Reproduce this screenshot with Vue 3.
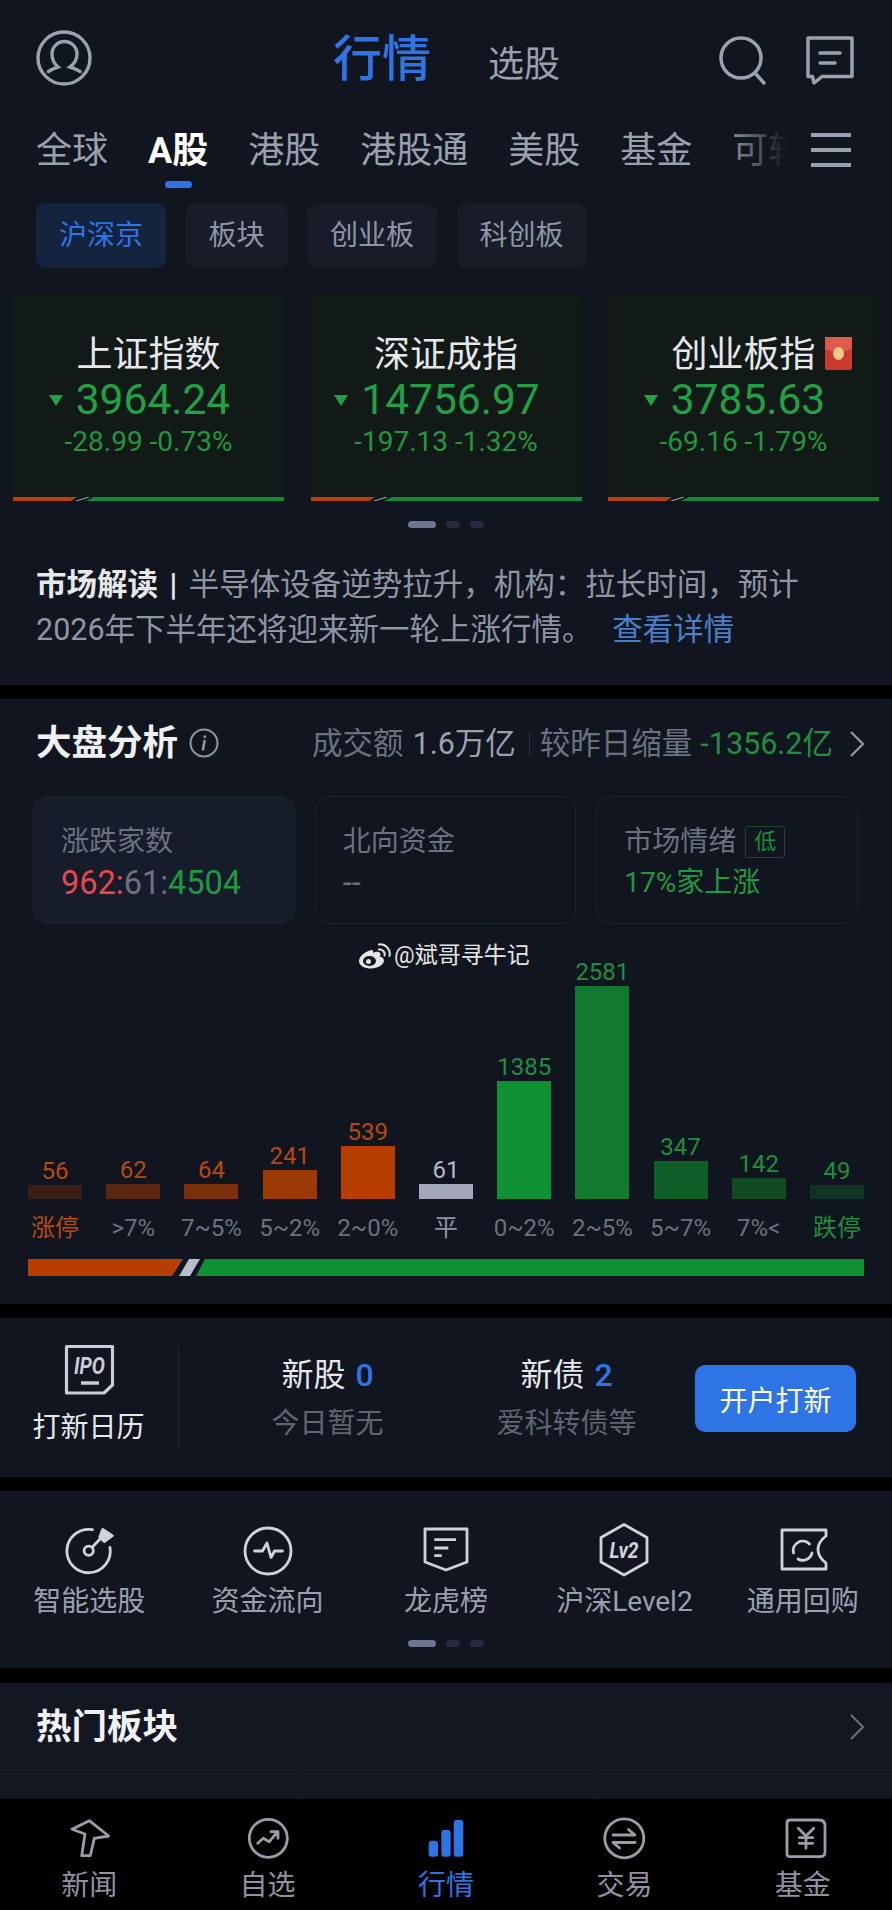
<script setup>
const tabs = ['全球', 'A股', '港股', '港股通', '美股', '基金', '可转债']
const chips = ['沪深京', '板块', '创业板', '科创板']

const indices = [
  { name: '上证指数', value: '3964.24', change: '-28.99 -0.73%' },
  { name: '深证成指', value: '14756.97', change: '-197.13 -1.32%' },
  { name: '创业板指', value: '3785.63', change: '-69.16 -1.79%', packet: true },
]

const red = '#b8480f'
const green = '#1f8f3e'
const buckets = [
  { count: 56, label: '涨停', height: 14, fill: '#3a1f15', ink: red, labelInk: red },
  { count: 62, label: '>7%', height: 15, fill: '#5a2511', ink: red },
  { count: 64, label: '7~5%', height: 15, fill: '#7c2f0b', ink: red },
  { count: 241, label: '5~2%', height: 29, fill: '#9b3a05', ink: red },
  { count: 539, label: '2~0%', height: 53, fill: '#b83e00', ink: red },
  { count: 61, label: '平', height: 15, fill: '#a3a9ba', ink: '#b5b9c6', labelInk: '#8f94a3' },
  { count: 1385, label: '0~2%', height: 118, fill: '#0f9032', ink: green },
  { count: 2581, label: '2~5%', height: 213, fill: '#117a30', ink: green },
  { count: 347, label: '5~7%', height: 38, fill: '#0f5f28', ink: green },
  { count: 142, label: '7%<', height: 21, fill: '#104a23', ink: green },
  { count: 49, label: '跌停', height: 14, fill: '#113324', ink: green, labelInk: green },
]
</script>

<template>
  <div class="page">
    <section class="block market">
      <header class="top">
        <svg class="avatar" width="56" height="56" viewBox="0 0 56 56" fill="none" stroke="#9aa0b0" stroke-width="3.4" stroke-linecap="round">
          <circle cx="28" cy="28" r="26" />
          <path d="M12.5 41.5Q17 38.5 22 37 16 32 16 24A12.5 12.5 0 0 1 41 24Q41 32 34 37 39 38.5 44 41.5" />
        </svg>
        <div class="top-title">
          <span class="top-active">行情</span>
          <span class="top-other">选股</span>
        </div>
        <div class="top-actions">
          <svg width="52" height="56" viewBox="0 0 52 56" fill="none" stroke="#9aa0b0" stroke-width="3.5" stroke-linecap="round">
            <circle cx="22" cy="24" r="20" />
            <path d="M36 39L45 49" />
          </svg>
          <svg width="52" height="56" viewBox="0 0 52 56" fill="none" stroke="#9aa0b0" stroke-width="3.5" stroke-linejoin="round" stroke-linecap="round">
            <path d="M4 4H48V42.5H18L10 49 8.5 42.5H4Z" />
            <path d="M16 19H36M16 29H31" />
          </svg>
        </div>
      </header>

      <nav class="tabs">
        <div class="tab-strip">
          <span v-for="tab in tabs" :key="tab" class="tab" :class="{ 'is-on': tab === 'A股' }">{{ tab }}</span>
        </div>
        <svg class="tab-menu" width="42" height="36" viewBox="0 0 42 36" fill="#9aa0b0">
          <rect x="1" y="1" width="40" height="4" />
          <rect x="1" y="16" width="40" height="4" />
          <rect x="1" y="31" width="40" height="4" />
        </svg>
      </nav>

      <div class="chips">
        <span v-for="(chip, i) in chips" :key="chip" class="chip" :class="{ 'is-on': i === 0 }">{{ chip }}</span>
      </div>

      <div class="index-cards">
        <article v-for="item in indices" :key="item.name" class="index-card">
          <div class="index-name">{{ item.name }}</div>
          <svg v-if="item.packet" class="packet" width="27" height="33" viewBox="0 0 27 33">
            <rect width="27" height="33" rx="2" fill="#cb3a30" />
            <path d="M0 0H27V12Q13.5 18 0 12Z" fill="#dd5a4c" />
            <ellipse cx="13.5" cy="16.5" rx="5.5" ry="6.5" fill="#f0c987" />
          </svg>
          <div class="index-value">
            <i class="down"></i>
            <span>{{ item.value }}</span>
          </div>
          <div class="index-change">{{ item.change }}</div>
          <svg class="ratio" width="271" height="4" viewBox="0 0 271 4">
            <polygon points="0,0 64,0 58,4 0,4" fill="#b8400a" />
            <path d="M63 4L76 0" stroke="#a8acb8" stroke-width="1" />
            <polygon points="81,0 271,0 271,4 73,4" fill="#15893a" />
          </svg>
        </article>
      </div>

      <div class="dots dots-index"><i class="on"></i><i></i><i></i></div>

      <p class="brief">
        <b>市场解读 | </b>半导体设备逆势拉升，机构：拉长时间，预计<br />2026年下半年还将迎来新一轮上涨行情。 <a>查看详情</a>
      </p>
    </section>

    <section class="block analysis">
      <div class="analysis-head">
        <h2 class="heading">大盘分析</h2>
        <svg class="info" width="30" height="30" viewBox="0 0 30 30" fill="none" stroke="#8f95a4" stroke-width="2">
          <circle cx="15" cy="15" r="13.5" />
          <path d="M15.8 8.5V9M15.5 13L14 21.5" stroke-width="2.6" stroke-linecap="round" />
        </svg>
        <div class="turnover">
          <span class="dim">成交额</span>
          <span class="bright">1.6万亿</span>
          <i class="sep"></i>
          <span class="dim">较昨日缩量</span>
          <span class="fall">-1356.2亿</span>
          <svg width="16" height="26" viewBox="0 0 16 26" fill="none" stroke="#8f95a4" stroke-width="2.4">
            <path d="M2 1L14 13 2 25" />
          </svg>
        </div>
      </div>

      <div class="stats">
        <div class="stat is-first">
          <div class="stat-label">涨跌家数</div>
          <div class="stat-value"><span class="c-red">962:</span><span class="c-gray">61:</span><span class="c-green">4504</span></div>
        </div>
        <div class="stat">
          <div class="stat-label">北向资金</div>
          <div class="stat-value c-gray">--</div>
        </div>
        <div class="stat">
          <div class="stat-label">市场情绪<span class="mood">低</span></div>
          <div class="stat-value stat-value-text c-green">17%家上涨</div>
        </div>
      </div>

      <!-- weibo handle laid over the chart -->
      <div class="handle">
        <svg width="34" height="26" viewBox="0 0 34 26" fill="none">
          <path d="M13 7C6 9 1 14 1 18C1 23 7 25.5 13 25.5C20 25.5 26 21.5 26 17.5C26 15 23.5 14 22 13.5C23 11 22.5 9.5 20.5 9C18.5 8.5 16 9.5 15 10C15.5 7.5 15 6.5 13 7Z" fill="#e4e4e4" />
          <ellipse cx="11.5" cy="18" rx="6.5" ry="5" fill="#11151f" />
          <circle cx="10.5" cy="18.5" r="2.5" fill="#e4e4e4" />
          <path d="M21 1.5C27 0.5 33 6 31.5 13M21 6.5C24 6 27.5 9 26.5 12.5" stroke="#e4e4e4" stroke-width="2" stroke-linecap="round" />
        </svg>
        <span>@斌哥寻牛记</span>
      </div>

      <div class="chart">
        <div v-for="b in buckets" :key="b.label" class="chart-col">
          <span class="chart-count" :style="{ color: b.ink }">{{ b.count }}</span>
          <div class="chart-bar" :style="{ height: b.height + 'px', background: b.fill }"></div>
        </div>
      </div>
      <div class="chart-labels">
        <span v-for="b in buckets" :key="b.label" :style="b.labelInk ? { color: b.labelInk } : null">{{ b.label }}</span>
      </div>
      <svg class="spread" width="836" height="17" viewBox="0 0 836 17">
        <polygon points="0,0 155,0 144,17 0,17" fill="#b83e00" />
        <polygon points="161,0 172,0 162,17 151,17" fill="#b9bdca" />
        <polygon points="177,0 836,0 836,17 168,17" fill="#0f9032" />
      </svg>
    </section>

    <section class="block ipo">
      <div class="ipo-entry">
        <svg width="56" height="56" viewBox="0 0 56 56" fill="none" stroke="#c8ccd4" stroke-width="3.2" stroke-linejoin="round">
          <path d="M5.5 4.5H51.5V43L43 51H5.5Z" />
          <text x="28.5" y="32" text-anchor="middle" fill="#c8ccd4" stroke="none" font-size="23" font-weight="700" font-style="italic" font-family="Roboto, sans-serif" textLength="31" lengthAdjust="spacingAndGlyphs">IPO</text>
          <path d="M20 41H38" stroke-width="3.5" />
        </svg>
        <span>打新日历</span>
      </div>
      <i class="ipo-divider"></i>
      <div class="ipo-cols">
        <div class="ipo-col">
          <div class="ipo-title">新股 <em>0</em></div>
          <div class="ipo-sub">今日暂无</div>
        </div>
        <div class="ipo-col">
          <div class="ipo-title">新债 <em>2</em></div>
          <div class="ipo-sub">爱科转债等</div>
        </div>
      </div>
      <button class="ipo-btn">开户打新</button>
    </section>

    <section class="block shortcuts">
      <div class="shortcut-row">
        <div class="shortcut">
          <svg width="56" height="56" viewBox="0 0 56 56" fill="none" stroke="#d0d3da" stroke-width="2.8" stroke-linecap="round" stroke-linejoin="round">
            <path d="M31.5 6.7A21.7 21.7 0 1 0 49 24.5" />
            <circle cx="27.7" cy="27.7" r="4.6" />
            <path d="M31 24.5L39 16" />
            <path d="M41.7 6.5L51.2 12.7 43.3 18.5 38.8 14.3Z" fill="#d0d3da" />
          </svg>
          <span>智能选股</span>
        </div>
        <div class="shortcut">
          <svg width="56" height="56" viewBox="0 0 56 56" fill="none" stroke="#d0d3da" stroke-width="2.8" stroke-linecap="round" stroke-linejoin="round">
            <circle cx="28" cy="28" r="23" />
            <path d="M14.5 28H22.5L27 20 31 34.5 34.5 28H42.5" />
          </svg>
          <span>资金流向</span>
        </div>
        <div class="shortcut">
          <svg width="56" height="56" viewBox="0 0 56 56" fill="none" stroke="#d0d3da" stroke-width="2.8" stroke-linejoin="round">
            <path d="M7 6H49V39L28 47 7 39Z" />
            <path d="M16.3 16.7H38M16.3 25H30.3M16.3 32.7H23.7" />
          </svg>
          <span>龙虎榜</span>
        </div>
        <div class="shortcut">
          <svg width="56" height="56" viewBox="0 0 56 56" fill="none" stroke="#d0d3da" stroke-width="2.8" stroke-linejoin="round">
            <path d="M28 1.5L51 14.5V39L28 52 5 39V14.5Z" />
            <text x="28" y="35" text-anchor="middle" fill="#d0d3da" stroke="none" font-size="22" font-weight="700" font-style="italic" font-family="Roboto, sans-serif" textLength="29" lengthAdjust="spacingAndGlyphs">Lv2</text>
          </svg>
          <span>沪深Level2</span>
        </div>
        <div class="shortcut">
          <svg width="56" height="56" viewBox="0 0 56 56" fill="none" stroke="#d0d3da" stroke-width="2.8" stroke-linejoin="round" stroke-linecap="round">
            <path d="M7 7H51V13Q43 19 43 26.5 43 34 51 40V46H7Z" />
            <path d="M18.5 30A9.5 9.5 0 0 1 34.5 21M37 30A9.5 9.5 0 0 1 23 36" />
          </svg>
          <span>通用回购</span>
        </div>
      </div>
      <div class="dots dots-short"><i class="on"></i><i></i><i></i></div>
    </section>

    <section class="block sectors">
      <div class="sectors-head">
        <h2 class="heading">热门板块</h2>
        <svg width="16" height="26" viewBox="0 0 16 26" fill="none" stroke="#6a7080" stroke-width="2">
          <path d="M2 1L14 13 2 25" />
        </svg>
      </div>
      <div class="sector-grid"><i></i><i></i><i></i></div>
    </section>

    <footer class="tabbar">
      <div class="tabbar-item">
        <svg width="56" height="56" viewBox="0 0 56 56" fill="none" stroke="#9a9ea8" stroke-width="2.8" stroke-linejoin="round">
          <path d="M11 19.3L28.3 10.7 47.7 26 33.3 28.3 29.3 45.7H20.7L24 24Z" />
        </svg>
        <span>新闻</span>
      </div>
      <div class="tabbar-item">
        <svg width="56" height="56" viewBox="0 0 56 56" fill="none" stroke="#9a9ea8" stroke-width="2.8" stroke-linecap="round" stroke-linejoin="round">
          <circle cx="28.3" cy="28.3" r="19" />
          <path d="M17.7 33.3L23.3 28.3 29.3 31.7 37.7 21.7M31 21.7H38V28.3" />
        </svg>
        <span>自选</span>
      </div>
      <div class="tabbar-item is-on">
        <svg width="56" height="56" viewBox="0 0 56 56" fill="#2f74e4">
          <rect x="10.7" y="30.7" width="9.3" height="16" rx="3" />
          <rect x="23.3" y="20" width="9.4" height="26.7" rx="3" />
          <rect x="35.7" y="10" width="9.6" height="36.7" rx="3" />
        </svg>
        <span>行情</span>
      </div>
      <div class="tabbar-item">
        <svg width="56" height="56" viewBox="0 0 56 56" fill="none" stroke="#9a9ea8" stroke-width="2.8" stroke-linecap="round" stroke-linejoin="round">
          <circle cx="28.3" cy="28.3" r="19.5" />
          <path d="M17 25H39L32.5 19.5M39 32.5H17L23.5 38" />
        </svg>
        <span>交易</span>
      </div>
      <div class="tabbar-item">
        <svg width="56" height="56" viewBox="0 0 56 56" fill="none" stroke="#9a9ea8" stroke-width="2.8" stroke-linecap="round" stroke-linejoin="round">
          <path d="M15 10H44Q50 10 50 16V42Q50 46.7 45 46.7H15Q12 46.7 12 43.7V13Q12 10 15 10Z" />
          <path d="M23.3 18.3L31 26 38.7 18.3M24.3 27.7H37.7M24.3 33.3H37.7M31 26V38.3" />
        </svg>
        <span>基金</span>
      </div>
    </footer>
  </div>
</template>

<style>
html,
body {
  margin: 0;
  background: #000;
}
</style>

<style scoped>
.page {
  width: 892px;
  height: 1910px;
  overflow: hidden;
  display: flex;
  flex-direction: column;
  font-family: Roboto, "Noto Sans CJK SC", sans-serif;
  color: #9aa0ae;
  background: #000;
}

.block {
  background: #11151f;
  position: relative;
}

/* top bar */
.market {
  height: 685px;
}

.top {
  display: flex;
  padding: 30px 36px 0 36px;
  height: 56px;
}

.top-title {
  display: flex;
  align-items: flex-end;
  gap: 57px;
  margin-left: 241px;
  height: 56px;
}

.top-active {
  font-size: 49px;
  line-height: 52px;
  font-weight: 500;
  color: #2f74e4;
}

.top-other {
  font-size: 36px;
  line-height: 42px;
  color: #9aa0ae;
}

.top-actions {
  display: flex;
  gap: 33px;
  margin-left: auto;
  padding-top: 4px;
}

/* channel tabs */
.tabs {
  display: flex;
  margin-top: 43px;
  padding: 0 40px 30px 36px;
}

.tab-strip {
  position: relative;
  display: flex;
  gap: 40px;
  width: 763px;
  height: 44px;
  overflow: hidden;
  padding-bottom: 17px;
  margin-bottom: -17px;
  white-space: nowrap;
}

.tab-strip::after {
  content: "";
  position: absolute;
  top: 0;
  right: 0;
  width: 75px;
  height: 44px;
  background: linear-gradient(90deg, rgba(17, 21, 31, 0), #11151f 85%);
}

.tab {
  position: relative;
  flex: none;
  font-size: 36px;
  line-height: 44px;
}

.tab.is-on {
  color: #fff;
  font-weight: 700;
}

.tab.is-on::after {
  content: "";
  position: absolute;
  left: 17px;
  top: 52px;
  width: 27px;
  height: 7px;
  border-radius: 4px;
  background: #2f74e4;
}

.tab-menu {
  margin: 3px 0 0 11px;
  flex: none;
}

.chips {
  display: flex;
  gap: 19.5px;
  padding-left: 36px;
}

.chip {
  padding: 0 23px;
  height: 65px;
  font-size: 28px;
  line-height: 66px;
  border-radius: 9px;
  background: #171c28;
  color: #8f95a4;
}

.chip.is-on {
  background: #14243f;
  color: #2f74e4;
}

/* index cards */
.index-cards {
  display: flex;
  gap: 26.5px;
  margin-top: 25px;
  padding-left: 13px;
}

.index-card {
  position: relative;
  width: 271px;
  height: 208px;
  padding-top: 40px;
  box-sizing: border-box;
  display: flex;
  flex-direction: column;
  align-items: center;
  background: #111a17;
  border-radius: 6px 6px 0 0;
}

.index-name {
  font-size: 36px;
  line-height: 44px;
  color: #e6e8ec;
}

.packet {
  position: absolute;
  left: 217px;
  top: 44px;
}

.index-value {
  display: flex;
  align-items: center;
  gap: 13px;
  margin: 1px 18px 0 0;
  font-size: 42.5px;
  line-height: 44px;
  color: #23a046;
}

.down {
  width: 0;
  height: 0;
  border-style: solid;
  border-width: 11px 7px 0;
  border-color: #23a046 transparent transparent;
}

.index-change {
  margin-top: 3px;
  font-size: 28px;
  line-height: 34px;
  color: #22953f;
}

.ratio {
  position: absolute;
  left: 0;
  bottom: 0;
}

/* pager dots */
.dots {
  display: flex;
  justify-content: center;
  gap: 10px;
}

.dots i {
  width: 14px;
  height: 7px;
  border-radius: 4px;
  background: #252b3d;
}

.dots i.on {
  width: 28px;
  background: #6c7690;
}

.dots-index {
  margin: 20px 0 0 -1px;
}

.dots-short {
  margin: 20px 0 0 -1px;
}

.brief {
  margin: 34px 0 0;
  padding-left: 36px;
  font-size: 30.5px;
  line-height: 45px;
  color: #8f95a4;
}

.brief b {
  color: #e6e8ec;
  font-weight: 700;
  word-spacing: 4px;
}

.brief a {
  color: #4a7fc9;
  margin-left: 12px;
}

/* market overview */
.analysis {
  margin-top: 14px;
  height: 606px;
  padding-top: 22px;
  box-sizing: border-box;
}

.analysis-head {
  display: flex;
  align-items: center;
  height: 44px;
  padding: 0 27px 0 36px;
}

.heading {
  margin: 0;
  font-size: 35.5px;
  line-height: 44px;
  font-weight: 700;
  color: #f0f1f4;
}

.info {
  margin-left: 11px;
}

.turnover {
  display: flex;
  align-items: center;
  margin-left: auto;
  padding-top: 2px;
  font-size: 30.5px;
  line-height: 44px;
  white-space: nowrap;
}

.dim {
  color: #6b7180;
}

.bright {
  margin-left: 9px;
  color: #9aa0ae;
}

.sep {
  width: 1px;
  height: 26px;
  margin: 0 10px 0 13px;
  background: #2a2f3c;
}

.fall {
  margin: 0 16px 0 8px;
  color: #1f8f3e;
}

.stats {
  display: flex;
  gap: 20px;
  margin-top: 31px;
  padding: 0 34px 0 33px;
}

.stat {
  flex: 1;
  height: 128px;
  box-sizing: border-box;
  padding: 27px 0 0 27px;
  border: 1px solid #1f2433;
  border-radius: 14px;
}

.stat.is-first {
  background: #171c2a;
}

.stat-label {
  display: flex;
  align-items: center;
  font-size: 28px;
  line-height: 36px;
  color: #6b7180;
}

.mood {
  margin-left: 9px;
  width: 40px;
  height: 32px;
  box-sizing: border-box;
  border: 1px solid #1c4a2c;
  border-radius: 3px;
  font-size: 22px;
  line-height: 30px;
  text-align: center;
  color: #1f8f3e;
}

.stat-value {
  margin-top: 5px;
  font-size: 32.5px;
  line-height: 36px;
}

.stat-value-text {
  font-size: 28px;
}

.c-red {
  color: #e5484d;
}

.c-gray {
  color: #6b7180;
}

.c-green {
  color: #1f9a3f;
}

.handle {
  position: absolute;
  left: 358px;
  top: 244px;
  display: flex;
  align-items: center;
  gap: 2px;
  font-size: 23px;
  line-height: 26px;
  color: #e4e4e4;
}

.chart {
  display: grid;
  grid-template-columns: repeat(11, 1fr);
  height: 275px;
  padding: 0 16px;
}

.chart-col {
  display: flex;
  flex-direction: column;
  align-items: center;
  justify-content: flex-end;
  min-width: 0;
}

.chart-count {
  font-size: 24px;
  line-height: 30px;
  margin-bottom: -1px;
}

.chart-bar {
  width: 54px;
}

.chart-labels {
  display: grid;
  grid-template-columns: repeat(11, 1fr);
  margin-top: 14px;
  padding: 0 16px;
  font-size: 24px;
  line-height: 30px;
  text-align: center;
  color: #6b7180;
  white-space: nowrap;
}

.spread {
  display: block;
  margin: 16px 0 0 28px;
}

/* new listings */
.ipo {
  margin-top: 14px;
  height: 159px;
  display: flex;
  flex: none;
}

.ipo-entry {
  display: flex;
  flex-direction: column;
  align-items: center;
  gap: 12px;
  width: 111px;
  margin: 24px 0 0 33px;
  font-size: 28px;
  line-height: 36px;
  color: #e6e8ec;
  white-space: nowrap;
}

.ipo-divider {
  width: 1px;
  height: 103px;
  margin: 28px 0 0 34px;
  background: #232835;
}

.ipo-cols {
  display: grid;
  grid-template-columns: repeat(2, 239px);
  padding-left: 29px;
}

.ipo-col {
  padding-top: 35px;
  text-align: center;
}

.ipo-title {
  font-size: 32px;
  line-height: 44px;
  word-spacing: 2px;
  color: #e6e8ec;
}

.ipo-title em {
  font-style: normal;
  font-weight: 500;
  color: #2f74e4;
}

.ipo-sub {
  margin-top: 9px;
  font-size: 28px;
  line-height: 36px;
  color: #5f6572;
}

.ipo-btn {
  position: relative;
  width: 161px;
  height: 67px;
  margin: 47px 0 0 9px;
  border: 0;
  border-radius: 10px;
  background: #2f74e4;
  color: #fff;
  font-family: inherit;
  font-size: 28px;
}

/* shortcuts */
.shortcuts {
  margin-top: 14px;
  height: 177px;
  padding-top: 32px;
  box-sizing: border-box;
}

.shortcut-row {
  display: grid;
  grid-template-columns: repeat(5, 1fr);
}

.shortcut {
  display: flex;
  flex-direction: column;
  align-items: center;
  gap: 5px;
  font-size: 28px;
  line-height: 36px;
  color: #9aa0ae;
  white-space: nowrap;
}

/* hot sectors */
.sectors {
  margin-top: 15px;
  flex: 1;
  background: #131722;
  padding-top: 22px;
}

.sectors-head {
  display: flex;
  align-items: center;
  justify-content: space-between;
  padding: 0 27px 0 36px;
}

.sector-grid {
  display: grid;
  grid-template-columns: 296px 298px 1fr;
  height: 29px;
  margin-top: 20px;
  border-top: 1px solid #181c27;
}

.sector-grid i + i {
  border-left: 1px solid #181c27;
}

/* bottom navigation */
.tabbar {
  display: grid;
  grid-template-columns: repeat(5, 1fr);
  height: 111px;
  padding-top: 11px;
  box-sizing: border-box;
  background: #000;
  flex: none;
}

.tabbar-item {
  display: flex;
  flex-direction: column;
  align-items: center;
  gap: 2px;
  font-size: 28px;
  line-height: 36px;
  color: #8f94a3;
}

.tabbar-item.is-on {
  color: #2f74e4;
}
</style>
